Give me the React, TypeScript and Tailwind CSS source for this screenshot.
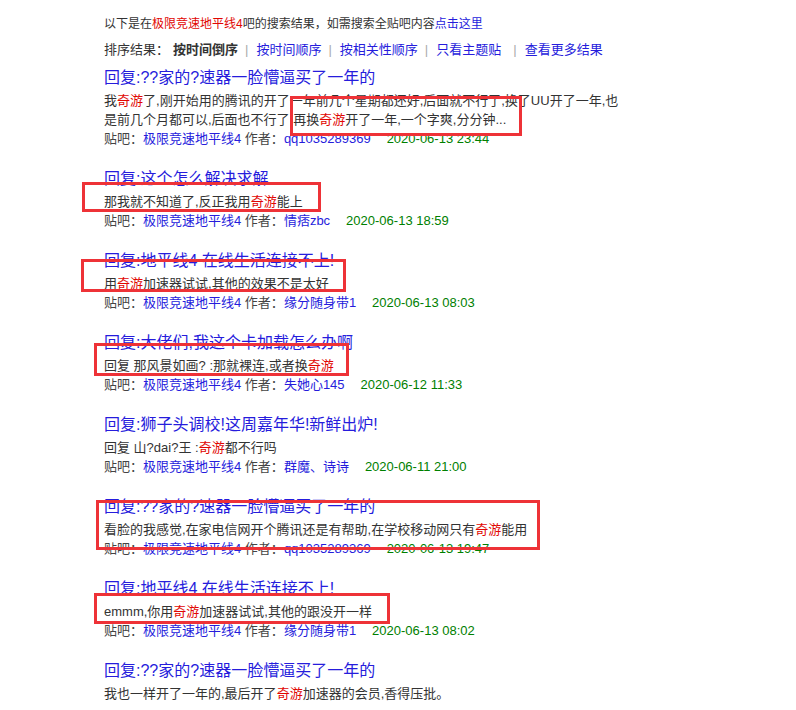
import React from "react"

type Seg = { t: string; hl?: boolean }

interface Result {
  title: string
  body: Seg[]
  author?: string
  date?: string
}

const results: Result[] = [
  {
    title: "回复:??家的?速器一脸懵逼买了一年的",
    body: [
      { t: "我" },
      { t: "奇游", hl: true },
      { t: "了,刚开始用的腾讯的开了一年前几个星期都还好,后面就不行了,换了UU开了一年,也是前几个月都可以,后面也不行了,再换" },
      { t: "奇游", hl: true },
      { t: "开了一年,一个字爽,分分钟..." },
    ],
    author: "qq1035289369",
    date: "2020-06-13 23:44",
  },
  {
    title: "回复:这个怎么解决求解",
    body: [{ t: "那我就不知道了,反正我用" }, { t: "奇游", hl: true }, { t: "能上" }],
    author: "情痞zbc",
    date: "2020-06-13 18:59",
  },
  {
    title: "回复:地平线4 在线生活连接不上!",
    body: [{ t: "用" }, { t: "奇游", hl: true }, { t: "加速器试试,其他的效果不是太好" }],
    author: "缘分随身带1",
    date: "2020-06-13 08:03",
  },
  {
    title: "回复:大佬们,我这个卡加载怎么办啊",
    body: [{ t: "回复 那风景如画? :那就裸连,或者换" }, { t: "奇游", hl: true }],
    author: "失她心145",
    date: "2020-06-12 11:33",
  },
  {
    title: "回复:狮子头调校!这周嘉年华!新鲜出炉!",
    body: [{ t: "回复 山?dai?王 :" }, { t: "奇游", hl: true }, { t: "都不行吗" }],
    author: "群魔、诗诗",
    date: "2020-06-11 21:00",
  },
  {
    title: "回复:??家的?速器一脸懵逼买了一年的",
    body: [
      { t: "看脸的我感觉,在家电信网开个腾讯还是有帮助,在学校移动网只有" },
      { t: "奇游", hl: true },
      { t: "能用" },
    ],
    author: "qq1035289369",
    date: "2020-06-13 19:47",
  },
  {
    title: "回复:地平线4 在线生活连接不上!",
    body: [{ t: "emmm,你用" }, { t: "奇游", hl: true }, { t: "加速器试试,其他的跟没开一样" }],
    author: "缘分随身带1",
    date: "2020-06-13 08:02",
  },
  {
    title: "回复:??家的?速器一脸懵逼买了一年的",
    body: [{ t: "我也一样开了一年的,最后开了" }, { t: "奇游", hl: true }, { t: "加速器的会员,香得压批。" }],
  },
]

// red annotation boxes drawn over the screenshot
const marks = [
  "left-[290px] top-[96px] w-[232px] h-[40px]",
  "left-[82px] top-[182px] w-[239px] h-[30px]",
  "left-[81px] top-[259px] w-[265px] h-[33px]",
  "left-[94px] top-[343px] w-[255px] h-[33px]",
  "left-[96px] top-[500px] w-[444px] h-[50px]",
  "left-[94px] top-[593px] w-[296px] h-[31px]",
]

function Sep({ wide = false }: { wide?: boolean }) {
  return <span className={`${wide ? "ml-[12px]" : "ml-[7px]"} mr-[8px] text-[#aaa]`}>|</span>
}

export default function App() {
  return (
    <div
      className="relative w-[796px] h-[710px] overflow-hidden bg-white text-[#333]"
      style={{ fontFamily: '"Liberation Sans", "Noto Sans CJK SC", sans-serif' }}
    >
      <div className="pl-[104px] pt-[15px]">
        <div className="text-[12px] leading-[18px]">
          以下是在<span className="text-[#e10602]">极限竞速地平线4</span>吧的搜索结果，如需搜索全贴吧内容
          <span className="text-[#261cdc]">点击这里</span>
        </div>

        <div className="mt-2 text-[13px] leading-[18px] whitespace-nowrap">
          <span>排序结果：</span>
          <span className="font-bold ml-[4px]">按时间倒序</span>
          <Sep />
          <span className="text-[#261cdc]">按时间顺序</span>
          <Sep />
          <span className="text-[#261cdc]">按相关性顺序</span>
          <Sep />
          <span className="text-[#261cdc]">只看主题贴</span>
          <Sep wide />
          <span className="text-[#261cdc]">查看更多结果</span>
        </div>

        <div className="mt-2">
          {results.map((r, i) => (
            <div key={i} className="mb-[20px]">
              <div className="text-[16px] leading-[22px] text-[#261cdc]">{r.title}</div>
              <div className="mt-[2px] w-[526px] text-[13px] leading-[19px] text-[#333]">
                {r.body.map((s, j) =>
                  s.hl ? (
                    <span key={j} className="text-[#e10602]">
                      {s.t}
                    </span>
                  ) : (
                    <span key={j}>{s.t}</span>
                  )
                )}
              </div>
              {r.author && (
                <div className="text-[13px] leading-[19px] whitespace-nowrap">
                  <span className="text-[#444]">贴吧：</span>
                  <span className="text-[#261cdc]">极限竞速地平线4</span>
                  <span className="text-[#444]"> 作者：</span>
                  <span className="text-[#261cdc]">{r.author}</span>
                  <span className="ml-4 text-[#008000]">{r.date}</span>
                </div>
              )}
            </div>
          ))}
        </div>
      </div>

      {marks.map((m, i) => (
        <div key={i} className={`absolute ${m} border-[3px] border-[#ee3237]`} />
      ))}
    </div>
  )
}
